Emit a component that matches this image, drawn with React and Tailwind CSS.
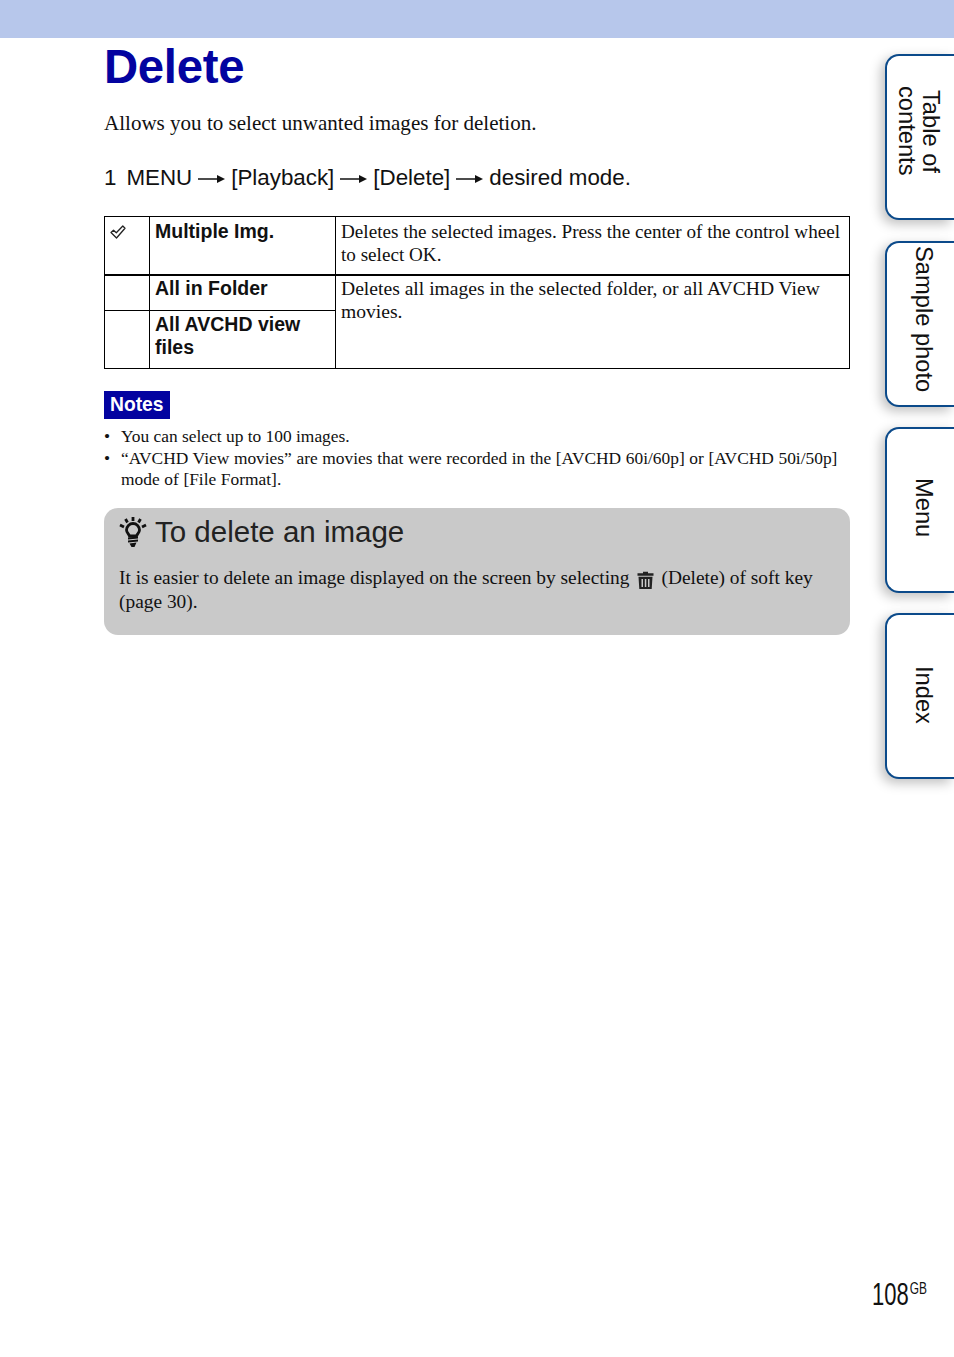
import React from 'react';

const sans = "font-['Liberation_Sans',Arial,sans-serif]";
const serif = "font-['Liberation_Serif','Times_New_Roman',serif]";

const Arrow = () => (
  <svg width="27" height="10" viewBox="0 0 27 10" className="inline-block mx-[6px] align-[1px]">
    <path d="M0 5H24" stroke="#111" strokeWidth="1.5" />
    <path d="M19 1L27 5L19 9Z" fill="#111" />
  </svg>
);

const CheckIcon = () => (
  <svg width="16" height="14" viewBox="0 0 16 14">
    <path d="M1 7.500L3.500 5.200L6.300 7.800L12.800 1L15 3.200L6.500 13Z" fill="none" stroke="#222" strokeWidth="1.300" strokeLinejoin="round" />
  </svg>
);

const BulbIcon = () => (
  <svg width="28" height="32" viewBox="0 0 28 32">
    <path d="M7.500 14a6.500 6.500 0 1 1 13 0c0 2.600-2.300 3.800-3 6h-7c-.7-2.200-3-3.400-3-6Z" fill="none" stroke="#111" strokeWidth="2.800" />
    <path d="M9 21.500L19 20.500V22.500L9 23.500ZM9 24.500L19 23.500V25.500L9 26.500ZM10.500 27.500L17.500 26.500L15.500 31H12.500Z" fill="#111" />
    <path d="M14 1V5M6.500 3L8.500 6.500M21.500 3L19.500 6.500M1 9L5 11M27 9L23 11" stroke="#111" strokeWidth="2.800" />
  </svg>
);

const TrashIcon = () => (
  <svg width="17" height="18" viewBox="0 0 17 18" className="inline-block ml-[8px] mr-[7px] align-[-5px]">
    <path d="M6 2.200V.800h5v1.400H16.500V4.800H.500V2.200Z" fill="#222" />
    <path d="M1.500 5.800H15.500L14.700 18H2.300ZM4.500 8V16H6V8ZM7.800 8V16H9.300V8ZM11 8V16H12.500V8Z" fill="#222" fillRule="evenodd" />
  </svg>
);

const SideTab = ({ lines, className }) => (
  <div className={`h-[166px] bg-white rounded-l-[14px] border-2 border-r-0 border-[#0b4a8a] shadow-[-4px_4px_12px_rgba(0,0,0,0.25)] flex items-center justify-center ${sans} text-[23.700px] leading-[24px] text-[#111] ${className}`}>
    <div className="[writing-mode:vertical-rl] text-center">
      {lines.map((line) => (
        <div key={line}>{line}</div>
      ))}
    </div>
  </div>
);

export default function App() {
  return (
    <div className="min-h-[1357px] bg-white flex flex-col text-[#111]">
      <div className="h-[38px] bg-[#b7c7eb]" />
      <div className="flex flex-1">
        <div className="w-[746px] ml-[104px]">
          <h1 className={`${sans} font-bold text-[47.300px] leading-[58px] text-[#0303a0] tracking-[-0.3px]`}>Delete</h1>
          <p className={`${serif} text-[21.050px] leading-[26px] mt-[14px]`}>Allows you to select unwanted images for deletion.</p>
          <p className={`${sans} text-[22.350px] leading-[28px] mt-[28px]`}>
            1<span className="inline-block w-[10px]" />MENU<Arrow />[Playback]<Arrow />[Delete]<Arrow />desired mode.
          </p>
          <table className="w-[746px] mt-[24px] border-collapse table-fixed border border-black">
            <colgroup>
              <col className="w-[45px]" />
              <col className="w-[186px]" />
              <col />
            </colgroup>
            <tbody>
              <tr className="h-[58px] border-b-2 border-black">
                <td className="border-r border-black align-top pl-[5px] pt-[8px]"><CheckIcon /></td>
                <td className={`border-r border-black align-top px-[5px] pt-[3px] ${sans} font-bold text-[19.500px] leading-[23px]`}>Multiple Img.</td>
                <td className={`align-top pl-[5px] pr-0 pt-[3px] ${serif} text-[19.150px] leading-[23px]`}>Deletes the selected images. Press the center of the control wheel to select OK.</td>
              </tr>
              <tr className="h-[36px] border-b border-black">
                <td className="border-r border-black" />
                <td className={`border-r border-black align-top px-[5px] pt-[1px] ${sans} font-bold text-[19.500px] leading-[23px]`}>All in Folder</td>
                <td rowSpan={2} className={`align-top pl-[5px] pr-0 pt-[1px] ${serif} text-[19.600px] leading-[23px]`}>Deletes all images in the selected folder, or all AVCHD View movies.</td>
              </tr>
              <tr className="h-[58px]">
                <td className="border-r border-black" />
                <td className={`border-r border-black align-top px-[5px] pt-[2px] ${sans} font-bold text-[19.500px] leading-[23px]`}>All AVCHD view files</td>
              </tr>
            </tbody>
          </table>
          <div className={`inline-block mt-[22px] bg-[#0303a0] text-white ${sans} font-bold text-[19.300px] leading-[28px] px-[6px]`}>Notes</div>
          <ul className={`${serif} text-[17.400px] leading-[21.500px] mt-[7px]`}>
            <li className="flex"><span className="w-[17px] shrink-0">•</span><span>You can select up to 100 images.</span></li>
            <li className="flex"><span className="w-[17px] shrink-0">•</span><span className="[word-spacing:0.28px]">“AVCHD View movies” are movies that were recorded in the [AVCHD 60i/60p] or [AVCHD 50i/50p] mode of [File Format].</span></li>
          </ul>
          <div className="mt-[17px] h-[127px] bg-[#c9c9c9] rounded-[14px] pl-[15px] pr-[20px] pt-[5px]">
            <div className="flex items-center gap-[8px] h-[38px]">
              <BulbIcon />
              <span className={`${sans} text-[29.500px] leading-[38px] text-[#222]`}>To delete an image</span>
            </div>
            <p className={`${serif} text-[19.400px] leading-[24.500px] mt-[15px]`}>
              It is easier to delete an image displayed on the screen by selecting<TrashIcon />(Delete) of soft key (page 30).
            </p>
          </div>
        </div>
        <div className="ml-auto w-[69px] pt-[16px] flex flex-col gap-[20px]">
          <SideTab lines={['Table of', 'contents']} className="mb-[1px] pr-[3px] pb-[12px]" />
          <SideTab lines={['Sample photo']} className="pl-[7px] pb-[9px]" />
          <SideTab lines={['Menu']} className="pl-[7px] pb-[5px]" />
          <SideTab lines={['Index']} className="pl-[7px] pb-[2px]" />
        </div>
      </div>
      <div className={`flex justify-end pr-[27px] pb-[46px] ${sans} text-[#111]`}>
        <span className="text-[31px] leading-[32px] scale-x-[0.71] origin-right">108</span>
        <span className="text-[16.500px] leading-[18px] scale-x-[0.72] origin-right ml-[-6px]">GB</span>
      </div>
    </div>
  );
}
